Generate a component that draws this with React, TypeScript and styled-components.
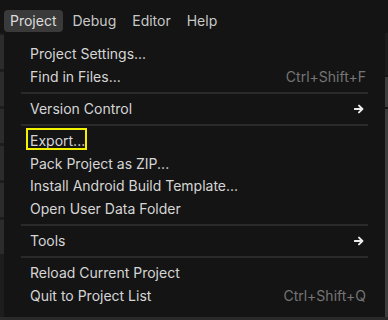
import React from "react";
import styled, { createGlobalStyle } from "styled-components";

const GlobalStyle = createGlobalStyle`
  html, body {
    margin: 0;
    padding: 0;
    background: #141414;
  }
  body {
    font-family: Inter, "Noto Sans", sans-serif;
    -webkit-font-smoothing: antialiased;
  }
`;

type Entry =
  | { kind: "item"; label: string; shortcut?: string; submenu?: boolean; focused?: boolean }
  | { kind: "separator" };

const entries: Entry[] = [
  { kind: "item", label: "Project Settings..." },
  { kind: "item", label: "Find in Files...", shortcut: "Ctrl+Shift+F" },
  { kind: "separator" },
  { kind: "item", label: "Version Control", submenu: true },
  { kind: "separator" },
  { kind: "item", label: "Export...", focused: true },
  { kind: "item", label: "Pack Project as ZIP..." },
  { kind: "item", label: "Install Android Build Template..." },
  { kind: "item", label: "Open User Data Folder" },
  { kind: "separator" },
  { kind: "item", label: "Tools", submenu: true },
  { kind: "separator" },
  { kind: "item", label: "Reload Current Project" },
  { kind: "item", label: "Quit to Project List", shortcut: "Ctrl+Shift+Q" },
];

const menus = ["Project", "Debug", "Editor", "Help"];

const ArrowIcon = () => (
  <svg width="10" height="10" viewBox="0 0 10 10" fill="none">
    <path
      d="M0.5 5H8.2M5 1.6L8.4 5L5 8.4"
      stroke="#ececec"
      strokeWidth="1.9"
      strokeLinecap="round"
      strokeLinejoin="round"
    />
  </svg>
);

const App = () => {
  return (
    <Screen>
      <GlobalStyle />
      <MenuBar>
        {menus.map((m, i) => (
          <MenuTitle key={m} $open={i === 0}>
            {m}
          </MenuTitle>
        ))}
      </MenuBar>
      <Workspace>
        <LeftDock>
          <DockTab />
          <DockTab />
          <DockTab />
          <DockTab />
          <DockTab />
          <DockTab />
        </LeftDock>
        <Center />
        <RightDock>
          <RightTop />
          <RightPanel />
          <RightPanel $grow />
        </RightDock>
      </Workspace>
      <BottomPanel />

      <Popup>
        {entries.map((e, i) =>
          e.kind === "separator" ? (
            <Separator key={i} />
          ) : (
            <Item key={i}>
              <Label $focused={e.focused}>{e.label}</Label>
              {e.shortcut && <Shortcut>{e.shortcut}</Shortcut>}
              {e.submenu && (
                <Submenu>
                  <ArrowIcon />
                </Submenu>
              )}
            </Item>
          )
        )}
      </Popup>
    </Screen>
  );
};

const Screen = styled.div`
  position: relative;
  width: 388px;
  height: 320px;
  overflow: hidden;
  background: #141414;
  display: flex;
  flex-direction: column;
`;

const MenuBar = styled.div`
  height: 33px;
  display: flex;
  align-items: flex-start;
  padding: 10px 0 0 4px;
  box-sizing: border-box;
`;

const MenuTitle = styled.div<{ $open?: boolean }>`
  height: 22px;
  line-height: 22px;
  padding: 0 6px;
  margin-right: 4px;
  border-radius: 4px;
  font-size: 14px;
  color: ${(p) => (p.$open ? "#dcdcdc" : "#c8c8c8")};
  background: ${(p) => (p.$open ? "#3a3a3a" : "transparent")};
`;

const Workspace = styled.div`
  flex: 1;
  display: flex;
`;

const LeftDock = styled.div`
  width: 4px;
  display: flex;
  flex-direction: column;
  gap: 3px;
  padding-top: 2px;
  background: #1d1d1d;
`;

const DockTab = styled.div`
  height: 34px;
  background: #2c2c2c;
`;

const Center = styled.div`
  flex: 1;
`;

const RightDock = styled.div`
  width: 3px;
  display: flex;
  flex-direction: column;
  gap: 2px;
`;

const RightTop = styled.div`
  height: 42px;
  background: #1c1c1c;
`;

const RightPanel = styled.div<{ $grow?: boolean }>`
  height: 30px;
  flex: ${(p) => (p.$grow ? 1 : "none")};
  background: #3d3d3d;
`;

const BottomPanel = styled.div`
  height: 3px;
  background: #2a2a2a;
`;

const Popup = styled.div`
  position: absolute;
  left: 4px;
  top: 33px;
  width: 381px;
  height: 284px;
  box-sizing: border-box;
  background: #141414;
  padding: 9.5px 17px 0 17px;
  display: flex;
  flex-direction: column;
`;

const Item = styled.div`
  height: 22.7px;
  flex: none;
  display: flex;
  align-items: center;
  padding: 0 2px 0 9px;
  font-size: 14px;
  color: #d6d6d6;
`;

const Label = styled.span<{ $focused?: boolean }>`
  flex: 1;
  white-space: nowrap;
  position: relative;
  &::before {
    content: "";
    display: ${(p) => (p.$focused ? "block" : "none")};
    position: absolute;
    left: -4px;
    top: -4.5px;
    width: 61px;
    height: 22px;
    box-sizing: border-box;
    border: 2px solid #f2f200;
  }
`;

const Shortcut = styled.span`
  color: #747474;
  font-size: 14px;
`;

const Submenu = styled.span`
  display: flex;
  align-items: center;
  padding-right: 2px;
`;

const Separator = styled.div`
  height: 9.35px;
  flex: none;
  display: flex;
  align-items: center;
  &::after {
    content: "";
    flex: 1;
    height: 2px;
    background: #2a2a2a;
  }
`;

export default App;
